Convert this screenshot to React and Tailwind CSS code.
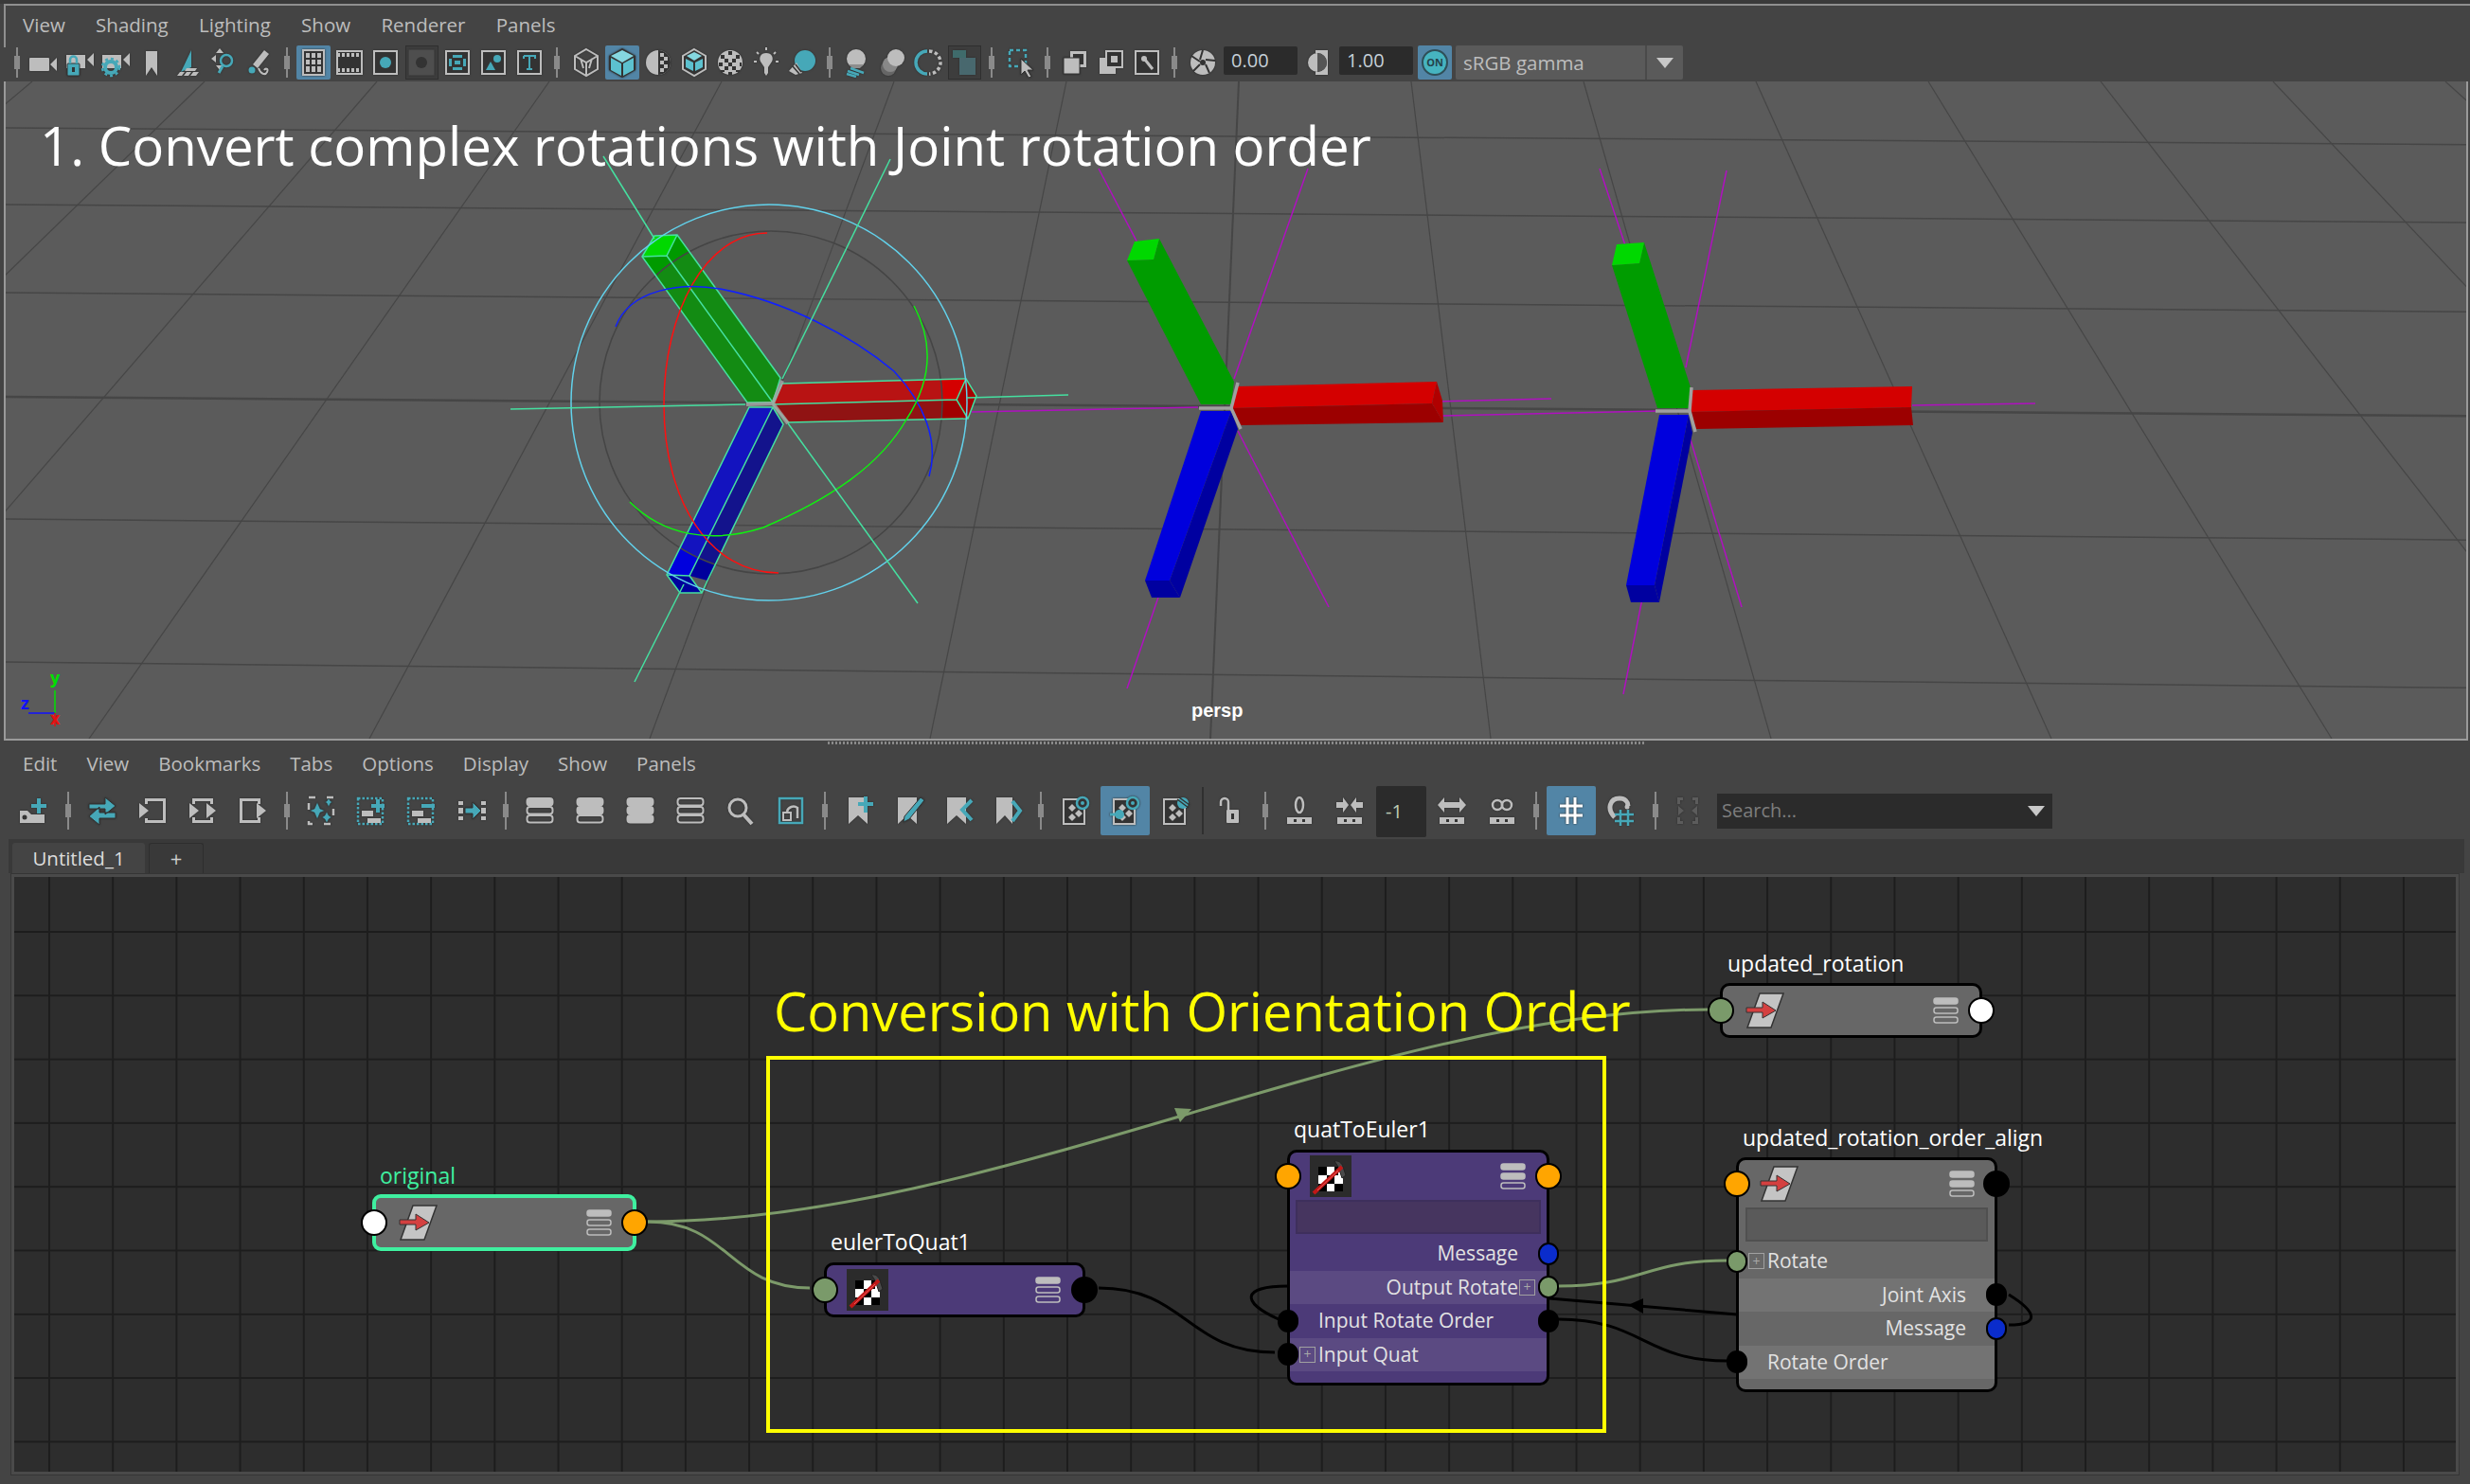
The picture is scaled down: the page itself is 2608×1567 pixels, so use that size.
import React from "react";

const g = "#bdbdbd";
const t = "#46a8b8";
const k = "#333333";

const Ribbon = () => <path d="M3 2h20v28l-10-9-10 9z" fill={g} />;
const Dash = () => (
  <>
    <rect x="3" y="23" width="26" height="7" fill={g} />
    <rect x="10" y="25" width="3" height="3" fill={k} />
    <rect x="19" y="25" width="3" height="3" fill={k} />
  </>
);
const Diamonds = () => (
  <>
    <rect x="4" y="4" width="22" height="26" fill={k} stroke={g} strokeWidth="2" />
    <path d="M9 13l4-4 4 4-4 4zM16 19l4-4 4 4-4 4zM9 23l4-4 4 4-4 4z" fill={g} />
  </>
);
const Stack = ({ n }) => (
  <>
    {[3, 12, 21].map((y, i) => (
      <rect
        key={y}
        x="2.5"
        y={y}
        width="27"
        height="7.5"
        rx="3"
        fill={i < n ? g : "none"}
        stroke={g}
        strokeWidth="2"
      />
    ))}
  </>
);
const Stripes = () => <path d="M7 25l12 4M10 22l14 5M6 28l10 3" stroke={t} strokeWidth="2.5" />;

const Icons = {
  cam: (
    <>
      <rect x="1" y="11" width="21" height="14" rx="1" fill={g} />
      <path d="M23 18l7-7v14z" fill={g} />
    </>
  ),
  camLock: (
    <>
      <rect x="2" y="8" width="20" height="14" fill={g} />
      <path d="M24 13l7-7v14z" fill={g} />
      <rect x="3" y="17" width="13" height="13" rx="1" fill={t} stroke={k} />
      <path d="M6 17v-4a3.500 3.500 0 0 1 7 0v4" fill="none" stroke={t} strokeWidth="2.500" />
      <rect x="8" y="21" width="3" height="5" fill={k} />
    </>
  ),
  camGear: (
    <>
      <rect x="2" y="8" width="20" height="14" fill={g} />
      <path d="M24 13l7-7v14z" fill={g} />
      <circle cx="11" cy="21" r="6" fill="none" stroke={t} strokeWidth="4" />
      <circle cx="11" cy="21" r="9" fill="none" stroke={t} strokeWidth="2.500" strokeDasharray="3 3" />
    </>
  ),
  mark: <path d="M10 4h12v26l-6-9-6 9z" fill={g} />,
  plane: (
    <>
      <path d="M20 3v18l-11 5z" fill={t} />
      <path d="M5 30l3-4h5l-3 4zM12 30l3-4h5l-3 4zM19 30l3-4h6l-3 4zM13 25l2-3h11l-2 3z" fill={g} />
    </>
  ),
  frameZoom: (
    <>
      <path d="M12 1l4 5H8zM3 12l5-4v8zM12 24l-4-5h8z" fill={g} />
      <circle cx="19" cy="14" r="6" fill="none" stroke={t} strokeWidth="2.500" />
      <path d="M15 20l-4 7" stroke={t} strokeWidth="3" />
    </>
  ),
  pen: (
    <>
      <path d="M21 3l5 4-12 15-5-4z" fill={g} />
      <circle cx="8" cy="24" r="3.500" fill={t} />
      <path d="M15 22c2 6 7 8 9 4s-2-4-3-2" fill="none" stroke={g} strokeWidth="2" />
    </>
  ),
  grid: (
    <>
      <rect x="5" y="3" width="22" height="26" fill={k} stroke={g} strokeWidth="2" />
      <path d="M8 6h4v5H8zM14 6h4v5h-4zM20 6h4v5h-4zM8 13h4v5H8zM14 13h4v5h-4zM20 13h4v5h-4zM8 20h4v6H8zM14 20h4v6h-4zM20 20h4v6h-4z" fill={g} />
    </>
  ),
  film: (
    <>
      <rect x="3" y="4" width="26" height="24" fill={k} stroke={g} strokeWidth="2" />
      <path d="M3 8h26M3 24h26" stroke={g} strokeWidth="4" strokeDasharray="3 2" />
    </>
  ),
  res: (
    <>
      <rect x="4" y="4" width="24" height="24" fill={k} stroke={g} strokeWidth="2" />
      <circle cx="16" cy="16" r="6" fill={t} />
    </>
  ),
  gate: (
    <>
      <rect x="3" y="3" width="26" height="26" fill="#4e4e4e" stroke="#4e4e4e" />
      <circle cx="16" cy="16" r="6" fill="#333" />
    </>
  ),
  safe: (
    <>
      <rect x="4" y="4" width="24" height="24" fill={k} stroke={g} strokeWidth="2" />
      <path d="M11 8h10v3H11zM11 21h10v3H11zM7 12h3v8H7zM22 12h3v8h-3zM13 14h6v4h-6z" fill={t} />
    </>
  ),
  shape: (
    <>
      <rect x="4" y="4" width="24" height="24" fill={k} stroke={g} strokeWidth="2" />
      <path d="M8 24l5-9 5 9z" fill={t} />
      <circle cx="20" cy="12" r="4" fill={t} />
    </>
  ),
  text: (
    <>
      <rect x="4" y="4" width="24" height="24" fill={k} stroke={g} strokeWidth="2" />
      <path d="M10 9h12v3M16 9v14M13 23h6M10 12V9" fill="none" stroke={t} strokeWidth="2" />
    </>
  ),
  wire: (
    <path d="M16 2l12 7v14l-12 7-12-7V9zM4 9l12 7 12-7M16 16v14M10 12l3 10M22 12l-3 10" fill="none" stroke={g} strokeWidth="2" />
  ),
  solid: (
    <>
      <path d="M16 1l14 8v15l-14 8-14-8V9z" fill={k} />
      <path d="M16 3l12 6-12 7-12-7z" fill="#85d7e0" />
      <path d="M4 11l11 6v13L4 24zM17 17l11-6v13l-11 6z" fill="#5cc1cf" />
    </>
  ),
  half: (
    <>
      <circle cx="16" cy="16" r="13" fill={g} />
      <path d="M16 3a13 13 0 0 1 0 26z" fill={k} />
      <path d="M18 6h4v4h-4zM22 10h4v4h-4zM18 14h4v4h-4zM22 18h4v4h-4zM18 22h4v4h-4z" fill={g} />
    </>
  ),
  wireTex: (
    <>
      <path d="M16 2l12 7v14l-12 7-12-7V9z" fill={k} stroke={g} strokeWidth="2" />
      <path d="M16 5l8 4-8 5-8-5z" fill="#85d7e0" />
      <path d="M7 12l8 4v9l-8-4zM17 16l8-4v9l-8 4z" fill="#5cc1cf" />
    </>
  ),
  check: (
    <>
      <circle cx="16" cy="16" r="13" fill={g} />
      <path d="M6 8h4v4H6zM14 4h4v4h-4zM22 8h4v4h-4zM10 12h4v4h-4zM18 12h4v4h-4zM4 16h4v4H4zM26 16h2v4h-2zM14 16h4v4h-4zM10 20h4v4h-4zM18 20h4v4h-4zM14 26h4v3h-4zM6 24h4v2H6zM22 24h4v2h-4z" fill={k} />
    </>
  ),
  bulb: (
    <>
      <path d="M16 6c6 0 8 5 6 9l-4 6v6l-2 3-2-3v-6l-4-6c-2-4 0-9 6-9z" fill={g} />
      <path d="M16 0v3M6 5l2 2M26 5l-2 2M3 15h3M26 15h3" stroke={g} strokeWidth="2" />
    </>
  ),
  lit: (
    <>
      <circle cx="19" cy="14" r="11" fill={t} />
      <path d="M2 25l8-9 6 11-7 2z" fill={g} />
      <path d="M6 20l7 8M9 18l6 8" stroke={k} strokeWidth="1.500" />
    </>
  ),
  floor: (
    <>
      <circle cx="16" cy="12" r="10" fill={g} />
      <path d="M8 18h16l-4 4h-8z" fill="#8d8d8d" />
      <Stripes />
    </>
  ),
  balls: (
    <>
      <circle cx="12" cy="22" r="8" fill="#666" />
      <circle cx="14" cy="18" r="8" fill="#888" />
      <circle cx="20" cy="11" r="9" fill={g} />
    </>
  ),
  ring: (
    <>
      <path d="M15 4a12 12 0 0 0 0 24" fill="none" stroke={t} strokeWidth="3.500" />
      <path d="M17 4a12 12 0 0 1 0 24" fill="none" stroke={g} strokeWidth="3.500" strokeDasharray="3.500 2.500" />
    </>
  ),
  dimSq: (
    <>
      <path d="M4 3h14v8H4z" fill="#3f6b6b" />
      <rect x="11" y="11" width="17" height="18" fill="#48686e" />
    </>
  ),
  marquee: (
    <>
      <rect x="4" y="3" width="17" height="17" fill="none" stroke={t} strokeWidth="2.500" strokeDasharray="4 3" />
      <path d="M16 12v17l4-4 4 7 3-1-4-7h6z" fill={g} stroke={k} />
    </>
  ),
  over: (
    <>
      <rect x="11" y="4" width="17" height="17" fill={g} />
      <rect x="14" y="7" width="11" height="11" fill={k} />
      <rect x="4" y="11" width="17" height="17" fill={g} stroke={k} />
    </>
  ),
  nest: (
    <>
      <rect x="4" y="11" width="17" height="17" fill={g} />
      <rect x="11" y="4" width="17" height="17" fill={k} stroke={g} strokeWidth="2" />
      <rect x="16" y="9" width="7" height="7" fill={g} />
    </>
  ),
  pict: (
    <>
      <rect x="4" y="4" width="24" height="24" fill={k} stroke={g} strokeWidth="2" />
      <circle cx="13" cy="12" r="3" fill={g} />
      <path d="M14 13l8 10" stroke={g} strokeWidth="3" />
    </>
  ),
  iris: (
    <>
      <circle cx="16" cy="16" r="13" fill={g} />
      <path d="M16 3l-3 10M29 14l-10-1M23 27l-4-9M6 25l7-7M4 9l9 6" stroke={k} strokeWidth="2" />
      <circle cx="16" cy="16" r="3" fill={k} />
    </>
  ),
  gain: (
    <>
      <rect x="14" y="3" width="13" height="26" fill={g} />
      <circle cx="16" cy="16" r="10" fill={k} />
      <path d="M16 6a10 10 0 0 0 0 20z" fill={g} />
      <path d="M16 6a10 10 0 0 1 0 20z" fill="#555" />
    </>
  ),
  nodeAdd: (
    <>
      <path d="M1 16h8l4 4h14v9H1z" fill={g} />
      <circle cx="6" cy="23" r="2.500" fill={k} />
      <path d="M21 3v16M13 11h16" stroke={t} strokeWidth="4" />
    </>
  ),
  swap: <path d="M2 9h17V2l11 9-11 9v-6H2zM30 18H13v-6L2 22l11 9v-7h17z" fill={t} stroke={k} />,
  inLeft: (
    <>
      <path d="M8 3h22v26H8v-5h3v2h16V6H11v3H8z" fill={g} />
      <path d="M2 8l10 8-10 8z" fill={g} />
    </>
  ),
  inBoth: (
    <>
      <path d="M5 3h22v6h-3V6H8v3H5zM5 23h3v3h16v-3h3v6H5z" fill={g} />
      <path d="M2 8l10 8-10 8zM20 8l10 8-10 8z" fill={g} />
    </>
  ),
  inRight: (
    <>
      <path d="M2 3h22v6h-3V6H5v20h16v-3h3v6H2z" fill={g} />
      <path d="M20 8l10 8-10 8z" fill={g} />
    </>
  ),
  spark: (
    <>
      <rect x="3" y="2" width="26" height="28" fill="none" stroke={g} strokeWidth="2.500" strokeDasharray="7 12" />
      <path d="M12 7l3 7 5 2-5 2-3 7-3-7-5-2 5-2zM24 3l2 3 2 1-2 1-2 4-2-4-2-1 2-1zM22 17l2 4 3 2-3 2-2 4-2-4-3-2 3-2z" fill={t} stroke={k} strokeWidth="0.500" />
    </>
  ),
  addSel: (
    <>
      <rect x="2" y="3" width="26" height="27" fill="none" stroke={t} strokeWidth="2.500" strokeDasharray="2.500 2" />
      <path d="M6 16h12v6H6zM12 24h14v5H12z" fill={g} />
      <path d="M23 4v14M16 11h14" stroke={t} strokeWidth="4" />
    </>
  ),
  subSel: (
    <>
      <rect x="2" y="3" width="26" height="27" fill="none" stroke={t} strokeWidth="2.500" strokeDasharray="2.500 2" />
      <path d="M6 16h12v6H6zM12 24h14v5H12z" fill={g} />
      <path d="M16 11h14" stroke={t} strokeWidth="4" />
    </>
  ),
  arrowIn: (
    <>
      <path d="M2 6h5v4H2zM26 6h5v4h-5zM2 22h5v4H2zM26 22h5v4h-5zM26 13h5v6h-5zM2 13h5v6H2z" fill={g} />
      <path d="M9 13h8V7l9 9-9 9v-6H9z" fill={t} stroke={k} />
    </>
  ),
  s1: <Stack n={1} />,
  s2: <Stack n={2} />,
  s3: <Stack n={3} />,
  s0: <Stack n={0} />,
  zoom: (
    <>
      <circle cx="13" cy="13" r="9" fill="none" stroke={g} strokeWidth="3" />
      <path d="M19 20l9 10" stroke={g} strokeWidth="4" />
    </>
  ),
  frameAll: (
    <>
      <rect x="4" y="3" width="24" height="26" fill="none" stroke={t} strokeWidth="2.500" />
      <path d="M12 17a7 7 0 0 1 11-4v11" fill="none" stroke={g} strokeWidth="2.500" />
      <rect x="8" y="18" width="8" height="8" fill="none" stroke={g} strokeWidth="2" />
    </>
  ),
  bmAdd: (
    <>
      <Ribbon />
      <path d="M21 1v17M13 9h16" stroke={t} strokeWidth="4" />
    </>
  ),
  bmPen: (
    <>
      <Ribbon />
      <path d="M27 2l4 3-16 20-6 3 1-6z" fill={t} stroke={k} />
    </>
  ),
  bmPrev: (
    <>
      <Ribbon />
      <path d="M29 5l-10 10 10 11" fill="none" stroke={t} strokeWidth="4" />
    </>
  ),
  bmNext: (
    <>
      <path d="M3 2h17v28l-8-9-9 9z" fill={g} />
      <path d="M20 6l8 10-8 11" fill="none" stroke={t} strokeWidth="4" />
    </>
  ),
  nsShow: (
    <>
      <Diamonds />
      <circle cx="24" cy="8" r="6" fill={k} stroke={t} strokeWidth="2.500" />
      <circle cx="24" cy="8" r="2" fill={t} />
    </>
  ),
  nsPlug: (
    <>
      <Diamonds />
      <circle cx="24" cy="8" r="6" fill={k} stroke={t} strokeWidth="2.500" />
      <circle cx="24" cy="8" r="2" fill={t} />
      <circle cx="10" cy="20" r="5" fill={t} />
      <path d="M0 20h8" stroke={t} strokeWidth="3" />
    </>
  ),
  nsHide: (
    <>
      <Diamonds />
      <circle cx="24" cy="8" r="6" fill={t} />
      <path d="M18 4l12 9M20 2l11 8" stroke={k} strokeWidth="1.500" />
    </>
  ),
  unlock: (
    <>
      <rect x="11" y="15" width="13" height="14" rx="1" fill={g} />
      <rect x="16" y="19" width="3" height="6" fill={k} />
      <path d="M13 15V7a4 4 0 0 0-8 0v4" fill="none" stroke={g} strokeWidth="2.500" />
    </>
  ),
  num0: (
    <>
      <ellipse cx="16" cy="10" rx="4" ry="8" fill="none" stroke={g} strokeWidth="2.500" />
      <Dash />
    </>
  ),
  inward: (
    <>
      <path d="M2 7h7V2l6 8-6 8v-5H2zM30 7h-7V2l-6 8 6 8v-5h7z" fill={g} />
      <Dash />
    </>
  ),
  outward: (
    <>
      <path d="M8 2l-7 8 7 8v-5h16v5l7-8-7-8v5H8z" fill={g} />
      <Dash />
    </>
  ),
  inf: (
    <>
      <circle cx="11" cy="10" r="5" fill="none" stroke={g} strokeWidth="2.500" />
      <circle cx="21" cy="10" r="5" fill="none" stroke={g} strokeWidth="2.500" />
      <Dash />
    </>
  ),
  hash: <path d="M12 2v28M20 2v28M4 11h24M4 21h24" stroke="#fff" strokeWidth="3" />,
  magnet: (
    <>
      <path d="M9 23C0 14 4 3 14 3c6 0 9 4 9 8" fill="none" stroke={g} strokeWidth="5" />
      <path d="M15 15v17M23 15v17M9 20h20M9 27h20" stroke={t} strokeWidth="2.500" />
      <circle cx="22" cy="12" r="2.500" fill={g} />
    </>
  ),
  dimFrame: (
    <path d="M5 2h6v3H8v4H5zM21 2h6v7h-3V5h-3zM5 23h3v4h3v3H5zM24 23h3v7h-6v-3h3zM6 11l6 5-6 5zM26 11l-6 5 6 5z" fill="#5c5c5c" />
  ),
};

const Icon = ({ name }) => (
  <svg viewBox="0 0 32 32" className="w-[32px] h-[32px] shrink-0 drop-shadow-[0_0_1px_#2b2b2b]">
    {Icons[name]}
  </svg>
);

const Sep = ({ tall }) => (
  <div className={(tall ? "" : "mt-[2px] ") + "w-[19px] shrink-0 flex justify-center"}>
    <div
      className={
        (tall ? "h-[40px] " : "h-[32px] ") + "w-[2px] bg-[#8a8a8a] flex items-center justify-center"
      }
    >
      <div className="w-[6px] h-[14px] shrink-0 bg-[#8a8a8a]" />
    </div>
  </div>
);

const Tool = ({ name, on, dim }) => (
  <div className="w-[38px] h-[36px] shrink-0 flex items-center justify-center">
    <div
      className={
        on
          ? "w-[36px] h-[36px] flex items-center justify-center rounded-[2px] bg-[#5285a6]"
          : dim
            ? "w-[35px] h-[36px] flex items-center justify-center bg-[#3d3d3d] border border-[#2f2f2f]"
            : "w-[36px] h-[36px] flex items-center justify-center"
      }
    >
      <Icon name={name} />
    </div>
  </div>
);

const BigTool = ({ name, on }) => (
  <div className="w-[53px] h-[52px] shrink-0 flex items-center justify-center">
    <div
      className={
        on
          ? "w-[52px] h-[52px] flex items-center justify-center rounded-[2px] bg-[#5285a6]"
          : "w-[52px] h-[52px] flex items-center justify-center"
      }
    >
      <Icon name={name} />
    </div>
  </div>
);

const NumField = ({ children }) => (
  <div className="w-[78px] h-[30px] shrink-0 rounded-[2px] bg-[#2b2b2b] px-[8px] text-[20px] leading-[30px] text-[#c6d0d8]">
    {children}
  </div>
);

const Menu = ({ items, className }) => (
  <div className={"flex pl-[24px] text-[20.500px] text-[#bdbdbd] " + className}>
    {items.map((m) => (
      <span key={m}>{m}</span>
    ))}
  </div>
);

const TopToolbar = () => (
  <div className="h-[36px] -mt-[2px] mb-[2px] flex items-start pl-[8px]">
    <Sep />
    {["cam", "camLock", "camGear", "mark", "plane", "frameZoom", "pen"].map((n) => (
      <Tool key={n} name={n} />
    ))}
    <Sep />
    <Tool name="grid" on />
    {["film", "res"].map((n) => (
      <Tool key={n} name={n} />
    ))}
    <Tool name="gate" dim />
    {["safe", "shape", "text"].map((n) => (
      <Tool key={n} name={n} />
    ))}
    <Sep />
    <div className="w-[3px] shrink-0" />
    <Tool name="wire" />
    <Tool name="solid" on />
    {["half", "wireTex", "check", "bulb", "lit"].map((n) => (
      <Tool key={n} name={n} />
    ))}
    <Sep />
    {["floor", "balls", "ring"].map((n) => (
      <Tool key={n} name={n} />
    ))}
    <Tool name="dimSq" dim />
    <Sep />
    <div className="w-[3px] shrink-0" />
    <Tool name="marquee" />
    <div className="ml-[-1px]">
      <Sep />
    </div>
    <div className="w-[1px] shrink-0" />
    {["over", "nest", "pict"].map((n) => (
      <Tool key={n} name={n} />
    ))}
    <Sep />
    <div className="w-[2px] shrink-0" />
    <Tool name="iris" />
    <div className="ml-[3px] mt-[1px]">
      <NumField>0.00</NumField>
    </div>
    <div className="w-[42px] shrink-0 flex justify-center mt-[2px]">
      <Icon name="gain" />
    </div>
    <div className="ml-[2px] mt-[1px]">
      <NumField>1.00</NumField>
    </div>
    <div className="ml-[5px] w-[36px] h-[36px] shrink-0 flex items-center justify-center bg-[#5285a6] rounded-[2px]">
      <div className="w-[28px] h-[28px] rounded-full bg-[#46b4c0] border-2 border-[#2f4f58] text-[11px] font-bold leading-[24px] text-center text-[#24424a]">
        ON
      </div>
    </div>
    <div className="ml-[4px] w-[240px] h-[36px] shrink-0 flex items-stretch rounded-[2px] bg-[#5a5a5a] text-[20.500px] leading-[36px] text-[#bdbdbd]">
      <div className="flex-1 px-[8px] border-r-2 border-[#4a4a4a]">sRGB gamma</div>
      <div className="w-[38px] flex items-center justify-center">
        <div className="w-0 h-0 border-x-[9px] border-x-transparent border-t-[11px] border-t-[#c8c8c8]" />
      </div>
    </div>
  </div>
);

const BottomToolbar = () => (
  <div className="h-[56px] flex items-start pl-[9px]">
    <div className="h-[52px] flex items-center">
      <BigTool name="nodeAdd" />
      <Sep tall />
      {["swap", "inLeft", "inBoth", "inRight"].map((n) => (
        <BigTool key={n} name={n} />
      ))}
      <Sep tall />
      {["spark", "addSel", "subSel", "arrowIn"].map((n) => (
        <BigTool key={n} name={n} />
      ))}
      <Sep tall />
      {["s1", "s2", "s3", "s0", "zoom", "frameAll"].map((n) => (
        <BigTool key={n} name={n} />
      ))}
      <Sep tall />
      <div className="w-[3px] shrink-0" />
      {["bmAdd", "bmPen", "bmPrev", "bmNext"].map((n) => (
        <div key={n} className="w-[52px] flex justify-center">
          <BigTool name={n} />
        </div>
      ))}
      <div className="ml-[-2px]">
        <Sep tall />
      </div>
      <BigTool name="nsShow" />
      <BigTool name="nsPlug" on />
      <BigTool name="nsHide" />
      <div className="w-[6px] shrink-0 flex justify-center">
        <div className="w-[2px] h-[50px] bg-[#2f2f2f]" />
      </div>
      <BigTool name="unlock" />
      <Sep tall />
      <BigTool name="num0" />
      <BigTool name="inward" />
      <div className="ml-[2px] w-[53px] h-[54px] mt-[2px] shrink-0 rounded-[2px] bg-[#2b2b2b] text-[20px] leading-[54px] pl-[10px] text-[#bfcdb4]">
        -1
      </div>
      <BigTool name="outward" />
      <BigTool name="inf" />
      <Sep tall />
      <div className="w-[1px] shrink-0" />
      <BigTool name="hash" on />
      <BigTool name="magnet" />
      <Sep tall />
      <div className="ml-[-2px]">
        <BigTool name="dimFrame" />
      </div>
      <div className="ml-[5px] w-[354px] h-[37px] shrink-0 flex items-center justify-between bg-[#2b2b2b] pl-[5px] pr-[8px] text-[20px] text-[#7d7d7d]">
        <span>Search...</span>
        <div className="w-0 h-0 border-x-[9px] border-x-transparent border-t-[11px] border-t-[#c8c8c8]" />
      </div>
    </div>
  </div>
);

const gridV = [-7, -6, -5, -4, -3, -2, -1, 0, 1, 2, 3, 4, 5, 6, 7];
const gridH = [
  [135, 0.0068],
  [216, 0.0073],
  [309, 0.0078],
  [419, 0.0078],
  [548, 0.0085],
  [699, 0.0105],
];
const mag = [
  [1160, 178, 1205, 264],
  [1381, 178, 1303, 400],
  [1307, 455, 1403, 641],
  [1226, 622, 1190, 727],
  [1519, 424, 1638, 421],
  [1026, 435, 1265, 430],
  [1521, 439, 1749, 434],
  [1689, 178, 1719, 268],
  [1823, 180, 1780, 388],
  [1784, 461, 1839, 641],
  [1735, 627, 1714, 733],
  [2019, 428, 2149, 426],
];
const mint = [
  [637, 165, 691, 252],
  [832, 447, 969, 637],
  [940, 168, 826, 400],
  [722, 617, 670, 720],
  [539, 432, 787, 427],
  [1021, 420, 1128, 417],
];

const Scene = () => (
  <svg viewBox="6 86 2598 694" className="absolute inset-0 w-full h-full">
    {gridH.map(([y, m]) => (
      <line
        key={y}
        x1="0"
        y1={y}
        x2="2608"
        y2={y + 2608 * m}
        stroke="#464646"
        strokeWidth={y === 419 ? 2.5 : 1.5}
      />
    ))}
    {gridV.map((i) => (
      <line
        key={i}
        x1={1308 + 182 * i}
        y1="86"
        x2={1278 + 296 * i}
        y2="780"
        stroke="#464646"
        strokeWidth={i === 0 ? 2 : 1.2}
      />
    ))}

    {/* first joint, selected */}
    <polygon points="678,271 704,270 816,425 789,425" fill="#009a00" />
    <polygon points="704,270 715,248 824,399 816,425" fill="#009a00" />
    <polygon points="691,249 715,248 704,270 678,271" fill="#00d800" />
    <polygon points="826,405 1020,400 1010,422 816,427" fill="#d40000" />
    <polygon points="816,427 1010,422 1022,442 832,446" fill="#a00000" />
    <polygon points="1020,400 1031,418 1022,442 1010,422" fill="#a80000" />
    <polygon points="791,430 816,430 728,608 704,607" fill="#0000dd" />
    <polygon points="816,430 827,448 747,613 728,608" fill="#00009c" />
    <polygon points="704,607 728,608 741,626 718,626" fill="#00009c" />
    <circle cx="814" cy="425" r="181" fill="#555555" fillOpacity="0.22" stroke="#454545" strokeWidth="1.500" />
    <g fill="none" stroke="#45e0a0" strokeWidth="1.500">
      <polygon points="678,271 691,249 715,248 824,399 816,425 789,425" />
      <path d="M704 270 L816 425 M678 271 L704 270 L715 248" />
      <polygon points="826,405 1020,400 1031,418 1022,442 832,446 816,427" />
      <path d="M816 427 L1010 422 L1020 400 M1010 422 L1022 442" />
      <polygon points="791,430 816,430 827,448 747,613 741,626 718,626 704,607" />
      <path d="M816 430 L728 608 L704 607 M728 608 L741 626" />
    </g>
    <g stroke="#a8a8a8" strokeWidth="4" opacity="0.8">
      <line x1="788" y1="427" x2="816" y2="426" />
      <line x1="826" y1="402" x2="816" y2="426" />
      <line x1="816" y1="426" x2="832" y2="447" />
    </g>
    <g fill="none" strokeWidth="1.500">
      <circle cx="812" cy="425" r="209" stroke="#62d2ec" />
      <path d="M810 246 C 745 246, 701 330, 701 427 C 701 530, 750 605, 822 605" stroke="#ff1010" />
      <path d="M650 345 C 665 305, 720 298, 760 305 C 830 318, 900 355, 944 392 C 975 425, 992 465, 981 503" stroke="#1020ff" />
      <path d="M965 323 C 985 360, 985 400, 957 443 C 930 490, 880 525, 806 557 C 750 575, 700 565, 665 530" stroke="#10f010" />
    </g>
    {mint.map(([a, b, c, d]) => (
      <line key={a + b} x1={a} y1={b} x2={c} y2={d} stroke="#45e0a0" strokeWidth="1.500" />
    ))}

    {/* other two joints */}
    {mag.map(([a, b, c, d]) => (
      <line key={a + b} x1={a} y1={b} x2={c} y2={d} stroke="#b010c0" strokeWidth="1.500" />
    ))}
    <polygon points="1190,275 1218,274 1224,252 1303,403 1300,427 1268,427" fill="#009c00" />
    <polygon points="1198,255 1224,252 1218,274 1190,275" fill="#00d800" />
    <polygon points="1307,408 1517,403 1512,426 1301,431" fill="#d40000" />
    <polygon points="1301,431 1512,426 1524,446 1310,449" fill="#9c0000" />
    <polygon points="1517,403 1523,423 1524,446 1512,426" fill="#b00000" />
    <polygon points="1268,434 1300,434 1235,613 1209,613" fill="#0000dd" />
    <polygon points="1300,434 1307,453 1246,631 1235,613" fill="#0000a0" />
    <polygon points="1209,613 1235,613 1246,631 1216,631" fill="#0000a0" />
    <g stroke="#a0a0a0" strokeWidth="3.500">
      <line x1="1266" y1="431" x2="1300" y2="431" />
      <line x1="1307" y1="404" x2="1300" y2="431" />
      <line x1="1300" y1="431" x2="1310" y2="453" />
    </g>

    <polygon points="1702,280 1731,278 1736,256 1785,409 1784,431 1750,431" fill="#009c00" />
    <polygon points="1707,258 1736,256 1731,278 1702,280" fill="#00d800" />
    <polygon points="1787,412 2019,408 2018,430 1784,435" fill="#d40000" />
    <polygon points="1784,435 2018,430 2020,449 1791,453" fill="#9c0000" />
    <polygon points="1752,438 1783,438 1747,618 1717,618" fill="#0000dd" />
    <polygon points="1783,438 1787,457 1752,636 1747,618" fill="#0000a0" />
    <polygon points="1717,618 1747,618 1752,636 1722,636" fill="#0000a0" />
    <g stroke="#a0a0a0" strokeWidth="3.500">
      <line x1="1748" y1="434" x2="1784" y2="434" />
      <line x1="1786" y1="409" x2="1784" y2="434" />
      <line x1="1784" y1="434" x2="1790" y2="456" />
    </g>

    <line x1="58" y1="729" x2="58" y2="753" stroke="#00e000" strokeWidth="1.500" />
    <line x1="30" y1="753" x2="58" y2="753" stroke="#1010ff" strokeWidth="1.500" />
    <line x1="58" y1="753" x2="58" y2="767" stroke="#e01010" strokeWidth="1.500" />
  </svg>
);

const Bars = ({ n }) => (
  <svg viewBox="0 0 27 28" className="w-[27px] h-[28px]">
    {[1, 11, 21].map((y, i) => (
      <rect
        key={y}
        x="1"
        y={y}
        width="25"
        height="6"
        rx="2.500"
        fill={i < n ? "#bdbdbd" : "none"}
        stroke="#bdbdbd"
        strokeWidth="1.500"
      />
    ))}
  </svg>
);

const Para = () => (
  <svg viewBox="0 0 42 38" className="w-[42px] h-[38px]">
    <polygon points="15,1 40,1 27,37 2,37" fill="#c4c4c4" stroke="#333" strokeWidth="1.500" />
    <path d="M1 16h17v-6l14 9-14 8v-6H1z" fill="#d44040" stroke="#333" strokeWidth="1" />
  </svg>
);

const Checker = () => (
  <svg viewBox="0 0 44 44" className="w-[44px] h-[44px]">
    <rect width="44" height="44" fill="#2b2b2b" />
    <rect x="9" y="12" width="26" height="26" fill="#fff" />
    <path d="M9 12h9v9H9zM26 12h4v9h-4zM18 21h8v9h-8zM9 30h9v8H9zM26 30h9v8h-9z" fill="#000" />
    <path d="M26 6c4-1 8 2 9 6l3 9-4 3-4-12z" fill="#4a4a4a" stroke="#222" />
    <path d="M4 40L34 12" stroke="#c01818" strokeWidth="4" />
    <path d="M8 37L30 16" stroke="#ee5a5a" strokeWidth="1" />
  </svg>
);

const ports = {
  black: "bg-black",
  blue: "bg-[#0a2ccc]",
  green: "bg-[#7a9a6a]",
  orange: "bg-[#ffa500]",
  white: "bg-white",
};

const HeadPort = ({ side, color }) => (
  <span
    className={
      "absolute top-1/2 -translate-y-1/2 w-[28px] h-[28px] rounded-full border-2 border-black " +
      (side === "l" ? "left-[-16px] " : "right-[-16px] ") +
      ports[color]
    }
  />
);

const RowPort = ({ side, color }) => (
  <span
    className={
      "absolute top-1/2 -translate-y-1/2 w-[22px] h-[24px] rounded-full border-2 border-black " +
      (side === "l" ? "left-[-13px] " : "right-[-13px] ") +
      ports[color]
    }
  />
);

const Plus = () => (
  <span className="w-[17px] h-[17px] shrink-0 flex items-center justify-center border border-[#a0a0a0] text-[14px] leading-none text-[#a8a8a8]">
    +
  </span>
);

const Row = ({ label, right, stripe, l, r, plusL, plusR, stripeClass }) => (
  <div
    className={
      "relative h-[35.500px] flex items-center text-[21px] text-[#e2e2e2] " +
      (right ? "justify-end pr-[30px] " : "pl-[30px] ") +
      (stripe ? stripeClass : "")
    }
  >
    {plusL && (
      <span className="absolute left-[10px] top-[9px]">
        <Plus />
      </span>
    )}
    <span>{label}</span>
    {plusR && (
      <span className="absolute right-[12px] top-[9px]">
        <Plus />
      </span>
    )}
    {l && <RowPort side="l" color={l} />}
    {r && <RowPort side="r" color={r} />}
  </div>
);

const Label = ({ className, children }) => (
  <span className={"absolute text-[23px] leading-[30px] whitespace-nowrap " + className}>{children}</span>
);

const Graph = () => (
  <div className="relative mx-[12px] h-[634px] border-[3px] border-[#4a4a4a] outline outline-[#353535] bg-[#2d2d2d] overflow-hidden">
    <div className="absolute inset-0 bg-[linear-gradient(to_right,#1d1d1d_2px,transparent_2px),linear-gradient(to_bottom,#1d1d1d_2px,transparent_2px)] bg-[size:67.200px_67.300px] bg-[position:36px_57px]" />
    {/* canvas in window coordinates */}
    <div className="absolute left-[-15px] top-[-926px] w-[2608px] h-[1567px]">
      <svg viewBox="0 0 2608 1567" className="absolute inset-0 w-[2608px] h-[1567px]">
        <g fill="none" strokeWidth="3">
          <path d="M684 1290 C 1050 1290, 1450 1066, 1803 1066" stroke="#7c9a6a" />
          <path d="M684 1290 C 770 1290, 770 1360, 855 1360" stroke="#7c9a6a" />
          <path d="M1645 1358 C 1735 1358, 1735 1331, 1824 1331" stroke="#7c9a6a" />
          <path d="M1160 1360 C 1253 1360, 1253 1428, 1346 1428" stroke="#000" />
          <path d="M1645 1393 C 1735 1393, 1735 1437, 1824 1437" stroke="#000" />
          <path d="M1636 1371 L1834 1388" stroke="#000" />
          <path d="M1360 1358 C 1310 1358, 1310 1375, 1350 1393" stroke="#000" />
          <path d="M2121 1367 C 2150 1385, 2155 1399, 2121 1399" stroke="#000" />
        </g>
        <polygon points="1258,1171 1240,1170 1246,1185" fill="#7c9a6a" />
        <polygon points="1719,1378 1735,1371 1735,1387" fill="#000" />
      </svg>

      <div className="absolute left-[809px] top-[1115px] w-[887px] h-[398px] border-[4px] border-[#ffff00]" />
      <span className="absolute left-[817px] top-[1029px] text-[56px] leading-[76px] whitespace-nowrap text-[#ffff00]">
        Conversion with Orientation Order
      </span>

      <Label className="left-[401px] top-[1226px] text-[#3ff0a0]">original</Label>
      <div className="absolute left-[393px] top-[1261px] w-[279px] h-[60px] rounded-[9px] border-[4px] border-[#3ff0a0] bg-[#676767] flex items-center justify-between pl-[24px] pr-[22px]">
        <Para />
        <Bars n={1} />
        <HeadPort side="l" color="white" />
        <HeadPort side="r" color="orange" />
      </div>

      <Label className="left-[877px] top-[1296px] text-white">eulerToQuat1</Label>
      <div className="absolute left-[870px] top-[1333px] w-[276px] h-[58px] rounded-[10px] border-[3px] border-black bg-[#4c3a78] flex items-center justify-between pl-[21px] pr-[23px]">
        <Checker />
        <Bars n={1} />
        <HeadPort side="l" color="green" />
        <HeadPort side="r" color="black" />
      </div>

      <Label className="left-[1366px] top-[1177px] text-white">quatToEuler1</Label>
      <div className="absolute left-[1359px] top-[1214px] w-[277px] h-[249px] rounded-[10px] border-[3px] border-black bg-[#4c3a78] flex flex-col">
        <div className="relative h-[50px] shrink-0 flex items-center justify-between pl-[21px] pr-[22px]">
          <Checker />
          <Bars n={2} />
          <HeadPort side="l" color="orange" />
          <HeadPort side="r" color="orange" />
        </div>
        <div className="mx-[6px] mb-[3px] h-[36px] shrink-0 bg-[#46355f] border-2 border-[#3e2f5c]" />
        <Row label="Message" right r="blue" stripeClass="bg-[#5b4a82]" />
        <Row label="Output Rotate" right r="green" plusR stripe stripeClass="bg-[#5b4a82]" />
        <Row label="Input Rotate Order" l="black" r="black" stripeClass="bg-[#5b4a82]" />
        <Row label="Input Quat" l="black" plusL stripe stripeClass="bg-[#5b4a82]" />
      </div>

      <Label className="left-[1840px] top-[1186px] text-white">updated_rotation_order_align</Label>
      <div className="absolute left-[1833px] top-[1222px] w-[276px] h-[248px] rounded-[10px] border-[3px] border-black bg-[#676767] flex flex-col">
        <div className="relative h-[50px] shrink-0 flex items-center justify-between pl-[22px] pr-[21px]">
          <Para />
          <Bars n={2} />
          <HeadPort side="l" color="orange" />
          <HeadPort side="r" color="black" />
        </div>
        <div className="mx-[7px] mb-[3px] h-[36px] shrink-0 bg-[#5a5a5a] border-2 border-[#505050]" />
        <Row label="Rotate" l="green" plusL stripeClass="bg-[#737373]" />
        <Row label="Joint Axis" right r="black" stripe stripeClass="bg-[#737373]" />
        <Row label="Message" right r="blue" stripeClass="bg-[#737373]" />
        <Row label="Rotate Order" l="black" stripe stripeClass="bg-[#737373]" />
      </div>

      <Label className="left-[1824px] top-[1002px] text-white">updated_rotation</Label>
      <div className="absolute left-[1816px] top-[1038px] w-[277px] h-[58px] rounded-[10px] border-[3px] border-black bg-[#676767] flex items-center justify-between pl-[24px] pr-[22px]">
        <Para />
        <Bars n={1} />
        <HeadPort side="l" color="green" />
        <HeadPort side="r" color="white" />
      </div>
    </div>
  </div>
);

export default function App() {
  return (
    <div className="w-[2608px] h-[1567px] overflow-hidden flex flex-col bg-[#444444] [font-family:'Open_Sans',sans-serif]">
      <div className="h-[4px] shrink-0 bg-[#3a3a3a]" />
      <div className="h-[46px] shrink-0 flex items-center border-t-2 border-[#8f8f8f] ml-[4px] border-l-2">
        <div className="ml-[-6px]">
          <Menu className="gap-[32.300px] pb-[3px]" items={["View", "Shading", "Lighting", "Show", "Renderer", "Panels"]} />
        </div>
      </div>
      <TopToolbar />

      <div className="relative ml-[4px] w-[2602px] h-[696px] shrink-0 border-x-2 border-b-2 border-[#9a9a9a] bg-[#5b5b5b] overflow-hidden">
        <Scene />
        <span className="absolute left-[36px] top-[28px] text-[56.400px] leading-[80px] whitespace-nowrap text-white">
          1. Convert complex rotations with Joint rotation order
        </span>
        <span className="absolute left-[1252px] top-[649px] text-[20px] font-bold text-white [font-family:'Liberation_Sans',sans-serif]">
          persp
        </span>
        <span className="absolute left-[47px] top-[620px] text-[18px] font-bold text-[#00e000] leading-none">y</span>
        <span className="absolute left-[16px] top-[647px] text-[18px] font-bold text-[#1010ff] leading-none">z</span>
        <span className="absolute left-[47px] top-[663px] text-[18px] font-bold text-[#e81010] leading-none">x</span>
      </div>

      <div className="relative h-[48px] shrink-0 flex items-center">
        <div className="absolute left-[874px] top-[1px] w-[864px] h-[3px] bg-[repeating-linear-gradient(to_right,#8a8a8a_0,#8a8a8a_2px,transparent_2px,transparent_4px)]" />
        <Menu className="gap-[31px]" items={["Edit", "View", "Bookmarks", "Tabs", "Options", "Display", "Show", "Panels"]} />
      </div>
      <BottomToolbar />

      <div className="ml-[9px] mr-[6px] h-[36px] shrink-0 bg-[#393939] flex items-end pl-[4px] gap-[4px]">
        <div className="w-[140px] h-[32px] rounded-t-[3px] bg-[#444444] text-center text-[20.500px] leading-[32px] text-[#dddddd]">
          Untitled_1
        </div>
        <div className="w-[58px] h-[32px] rounded-t-[3px] border border-b-0 border-[#2e2e2e] text-center text-[22px] leading-[30px] text-[#cccccc]">
          +
        </div>
      </div>
      <div className="h-[1px] shrink-0" />
      <Graph />
    </div>
  );
}
